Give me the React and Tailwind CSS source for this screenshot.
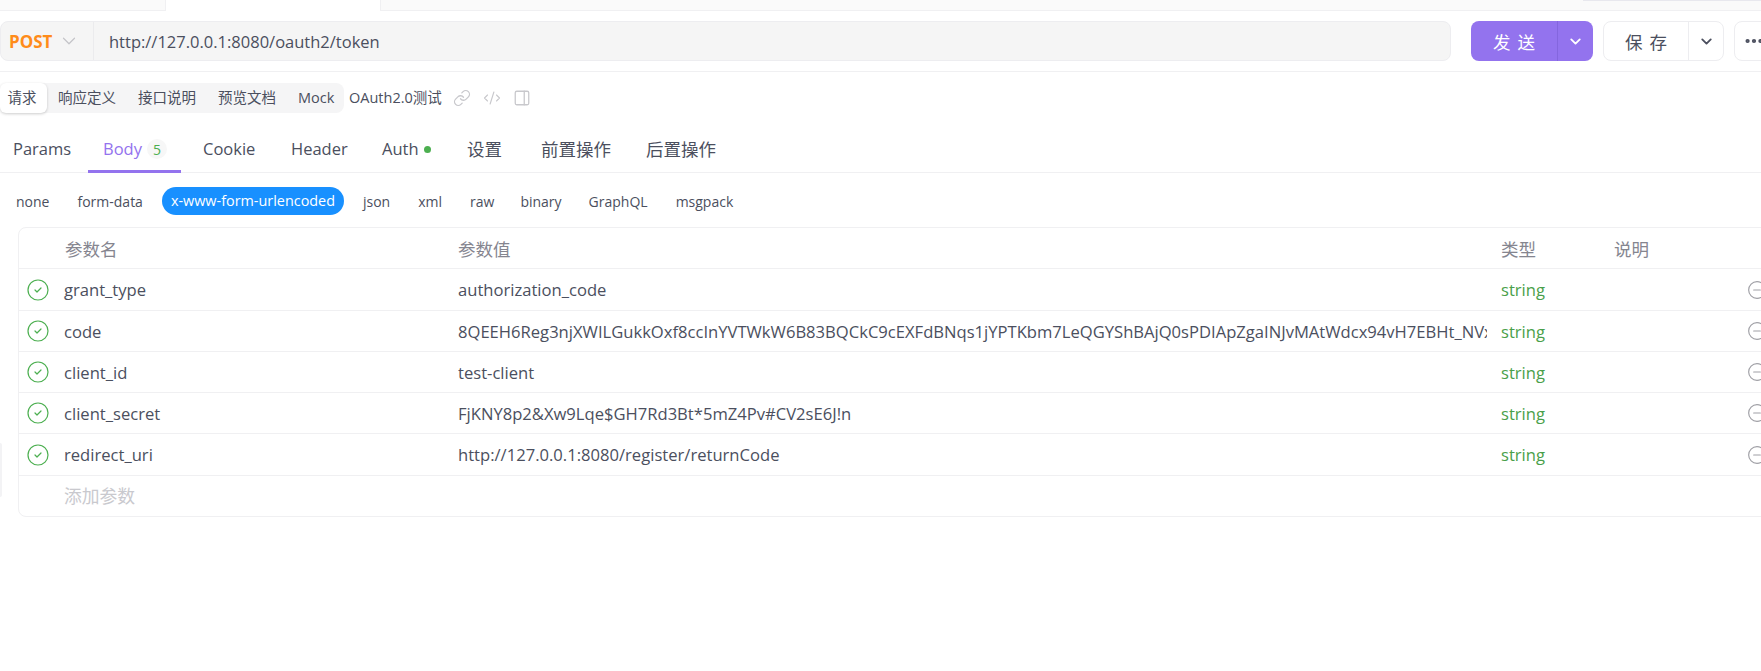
import { ChevronDown, CircleCheck, CircleMinus, CodeXml, Ellipsis, Link, PanelRight } from "lucide-react";

const subTabs = [
  { label: "响应定义", className: "w-[81px] pl-[11px]" },
  { label: "接口说明", className: "w-[80px] pl-[10px]" },
  { label: "预览文档", className: "w-[80px] pl-[10px]" },
  { label: "Mock", className: "w-[56px] pl-[10px]" },
];

const tabs = [
  { label: "Params", className: "w-[88px] pl-[13px]" },
  { label: "Body", className: "w-[93px] pl-[15px] text-[#9373ee]", badge: "5", active: true },
  { label: "Cookie", className: "w-[88px] pl-[22px]" },
  { label: "Header", className: "w-[91px] pl-[22px]" },
  { label: "Auth", className: "w-[85px] pl-[22px]", dot: true },
  { label: "设置", className: "w-[74px] pl-[22px] text-[17.5px]" },
  { label: "前置操作", className: "w-[105px] pl-[22px] text-[17.5px]" },
  { label: "后置操作", className: "w-[100px] pl-[22px] text-[17.5px]" },
];

const bodyTypes = [
  { label: "none", className: "px-[9px]" },
  { label: "form-data", className: "px-[9px]" },
  { label: "x-www-form-urlencoded", className: "flex items-center h-full px-[9px] rounded-full bg-[#1890ff] text-white text-[14.4px]" },
  { label: "json", className: "px-[9px]" },
  { label: "xml", className: "px-[9px]" },
  { label: "raw", className: "px-[9px] -mr-[2px]" },
  { label: "binary", className: "px-[9px] -mr-[1px]" },
  { label: "GraphQL", className: "px-[9px]" },
  { label: "msgpack", className: "px-[9px]" },
];

const params = [
  { name: "grant_type", value: "authorization_code", height: "h-[42px]" },
  {
    name: "code",
    value: "8QEEH6Reg3njXWILGukkOxf8ccInYVTWkW6B83BQCkC9cEXFdBNqs1jYPTKbm7LeQGYShBAjQ0sPDIApZgaINJvMAtWdcx94vH7EBHt_NVxk2mR9",
    height: "h-[41px]",
  },
  { name: "client_id", value: "test-client", height: "h-[41px]" },
  { name: "client_secret", value: "FjKNY8p2&Xw9Lqe$GH7Rd3Bt*5mZ4Pv#CV2sE6J!n", height: "h-[41px]" },
  { name: "redirect_uri", value: "http://127.0.0.1:8080/register/returnCode", height: "h-[42px]" },
];

const gridCols = "grid grid-cols-[45px_394px_1043px_113px_133px_40px] items-center";

export default function App() {
  return (
    <div className="relative w-[1761px] h-[671px] overflow-hidden bg-white text-[#4b4f5e] font-['Open_Sans','Noto_Sans_CJK_SC',sans-serif]">
      {/* top tab strip */}
      <div className="flex h-[11px]">
        <div className="w-[166px] bg-[#fafafa] border-b border-r border-[#f0f0f2]" />
        <div className="w-[214px] bg-white" />
        <div className="flex-1 bg-[#fafafa] border-b border-l border-[#f0f0f2]" />
      </div>
      <div className="absolute right-0 top-0 w-[178px] h-[1px] bg-[#e8e8ee]" />

      {/* url bar */}
      <div className="flex h-[61px] pt-[10px] border-b border-[#f0f0f2]">
        <div className="flex shrink-0 w-[1451px] h-10 rounded-lg border border-[#ededf0] bg-[#f5f5f5]">
          <div className="flex items-center w-[93px] pl-2 border-r border-[#ebebed]">
            <span className="pt-[2px] text-[17px] font-bold text-[#ff8c1a]">POST</span>
            <ChevronDown className="ml-[6px] text-[#c4c4c8]" size={22} strokeWidth={1.3} />
          </div>
          <div className="flex items-center pl-[15px] pt-[2px] text-[16.5px]">http://127.0.0.1:8080/oauth2/token</div>
        </div>
        <div className="flex shrink-0 ml-5 w-[122px] h-10 rounded-lg bg-[#9373ee] text-white">
          <div className="flex items-center justify-center w-[87px] pl-[7px] pt-[2px] text-[17.5px] tracking-[7px] border-r border-[#8466de]">发送</div>
          <div className="flex items-center justify-center flex-1">
            <ChevronDown size={17} strokeWidth={2.6} />
          </div>
        </div>
        <div className="flex shrink-0 ml-[10px] w-[121px] h-10 rounded-lg border border-[#ededf0]">
          <div className="flex items-center justify-center w-[85px] pl-[7px] pt-[2px] text-[17.5px] tracking-[7px] border-r border-[#ededf0]">保存</div>
          <div className="flex items-center justify-center flex-1">
            <ChevronDown size={17} strokeWidth={2.6} />
          </div>
        </div>
        <div className="flex shrink-0 items-center ml-[10px] w-[60px] h-10 pl-[8px] rounded-lg border border-[#ededf0]">
          <Ellipsis size={22} strokeWidth={2.6} />
        </div>
      </div>

      {/* sub tabs */}
      <div className="flex items-center h-[30px] mt-[11px] text-[14.5px]">
        <div className="flex items-center w-[344px] h-full rounded-lg bg-[#f5f5f6]">
          <div className="flex items-center justify-center w-[47px] h-full pr-[3px] rounded-md bg-white shadow-[0_1px_3px_rgba(0,0,0,0.2)]">请求</div>
          {subTabs.map((t) => (
            <div key={t.label} className={t.className}>
              {t.label}
            </div>
          ))}
        </div>
        <span className="ml-[5px]">OAuth2.0测试</span>
        <div className="flex items-center gap-[12px] ml-[11px] text-[#c8c8cc]">
          <Link size={18} strokeWidth={1.7} />
          <CodeXml size={18} strokeWidth={1.5} />
          <PanelRight size={18} strokeWidth={1.7} />
        </div>
      </div>

      {/* request tabs */}
      <div className="flex h-[60px] border-b border-[#f0f0f2] text-[16.5px]">
        {tabs.map((t) => (
          <div key={t.label} className={`relative flex items-center h-[60px] pt-[12px] ${t.className}`}>
            {t.label}
            {t.badge && (
              <span className="flex items-center justify-center ml-[5px] w-5 h-5 rounded-full bg-[#f7f7f7] text-[14px] text-[#4caf50]">{t.badge}</span>
            )}
            {t.dot && <span className="ml-[5px] w-[7px] h-[7px] rounded-full bg-[#4caf50]" />}
            {t.active && <span className="absolute inset-x-0 bottom-0 h-[3px] bg-[#9373ee]" />}
          </div>
        ))}
      </div>

      {/* body types */}
      <div className="flex items-center gap-[10px] h-[28px] mt-[14px] ml-[7px] text-[14px]">
        {bodyTypes.map((b) => (
          <div key={b.label} className={b.className}>
            {b.label}
          </div>
        ))}
      </div>

      {/* params table */}
      <div className="w-[1775px] ml-[18px] mt-3 rounded-lg border border-[#f0f0f2] text-[16.6px]">
        <div className={`${gridCols} h-[41px] pt-[2px] border-b border-[#f0f0f2] text-[17.5px] text-[#85858f]`}>
          <div />
          <div className="pl-[1px]">参数名</div>
          <div>参数值</div>
          <div>类型</div>
          <div>说明</div>
          <div />
        </div>
        {params.map((p) => (
          <div key={p.name} className={`${gridCols} ${p.height} border-b border-[#f0f0f2]`}>
            <div className="flex justify-center pr-[7px] text-[#4caf50]">
              <CircleCheck size={24} strokeWidth={1.2} />
            </div>
            <div className="pt-[2px]">{p.name}</div>
            <div className="mr-[14px] pt-[2px] overflow-hidden whitespace-nowrap">{p.value}</div>
            <div className="pt-[2px] text-[#4a9f4a]">string</div>
            <div />
            <div className="text-[#a0a0a6]">
              <CircleMinus size={20} strokeWidth={1.4} />
            </div>
          </div>
        ))}
        <div className={`${gridCols} h-[40px] text-[17.8px] text-[#c9c9ce]`}>
          <div />
          <div>添加参数</div>
        </div>
      </div>

      {/* collapsed sidebar handle */}
      <div className="absolute left-0 top-[443px] w-[2px] h-[54px] rounded-r bg-[#f3f3f5]" />
    </div>
  );
}
